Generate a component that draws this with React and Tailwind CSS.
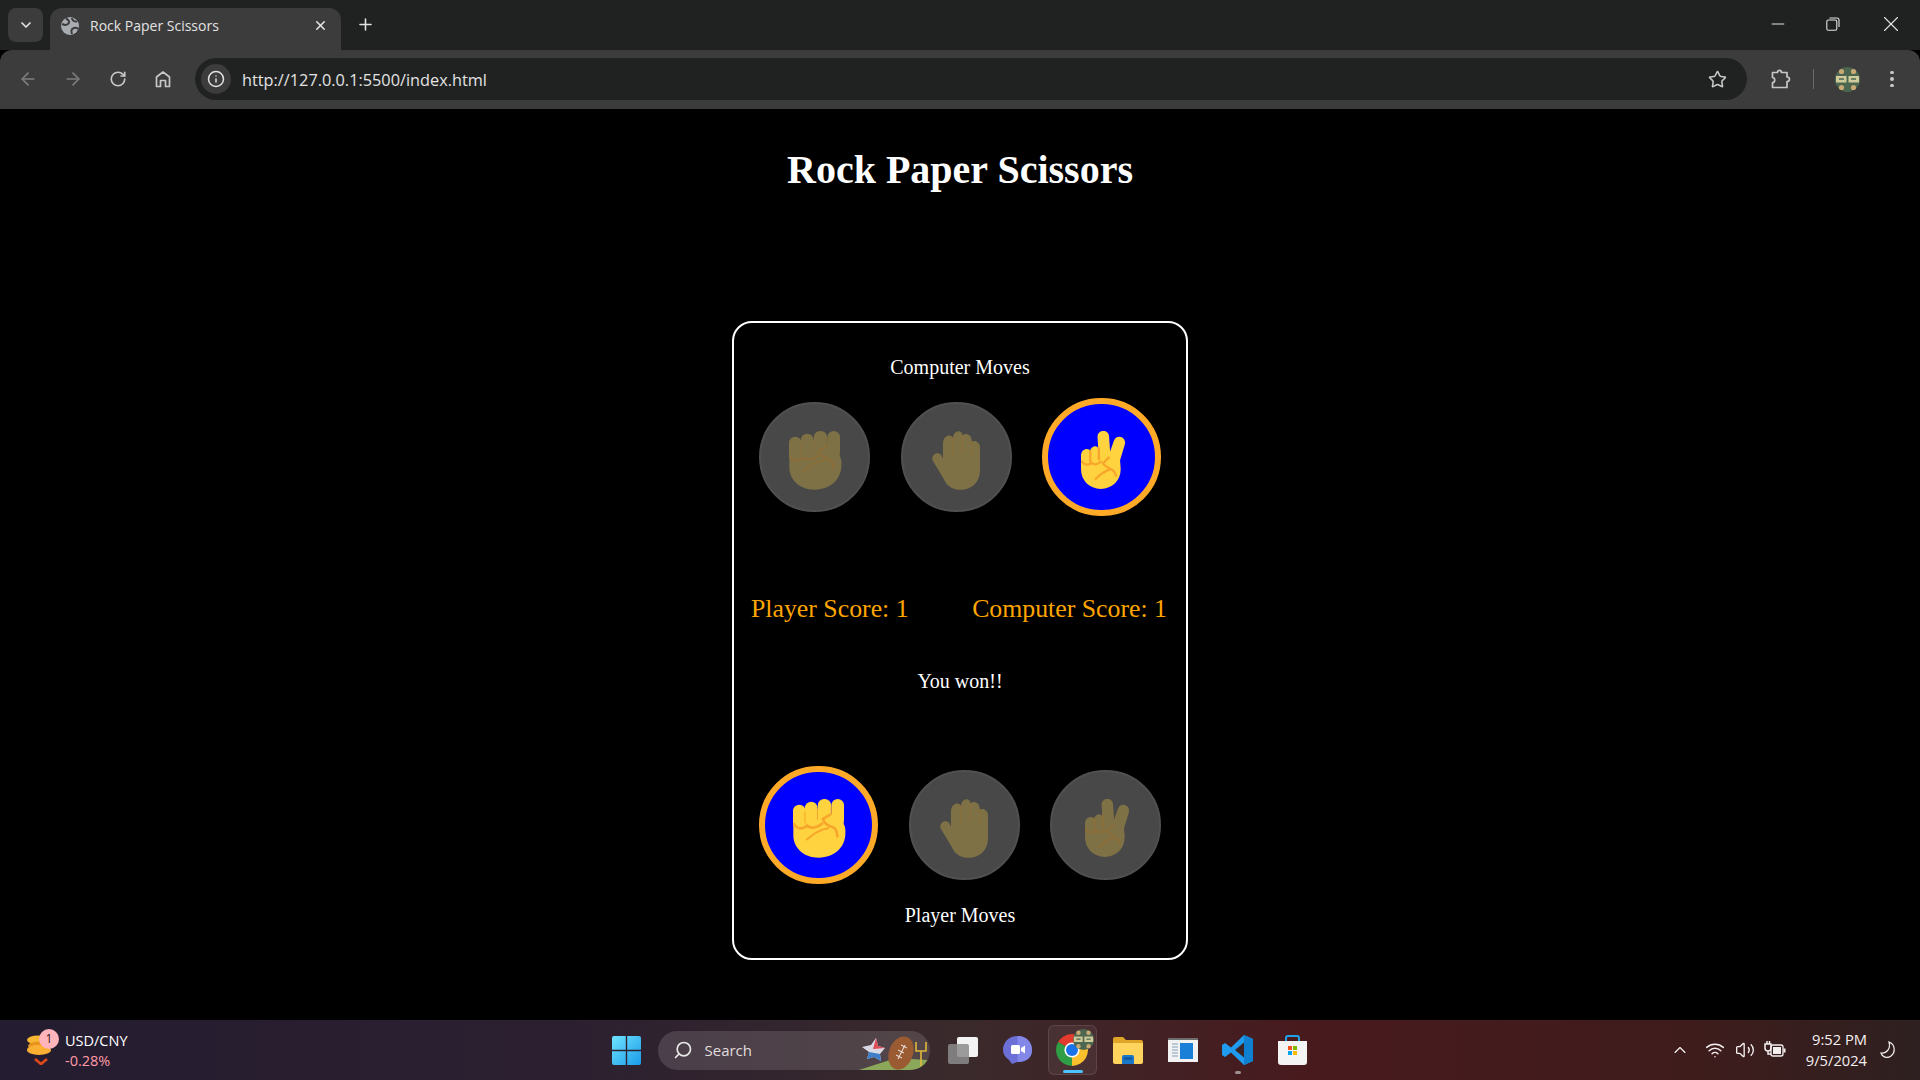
import React from 'react';
import { ArrowLeft, ArrowRight, RotateCw, Info, Star, X, Plus, Minus, ChevronDown, ChevronUp, Search, Wifi, Volume2 } from 'lucide-react';

const BRIGHT = { skin: '#ffd23f', fold: '#f8a62b' };
const DIM = { skin: '#7e7145', fold: '#8a6f3c' };

function Fist({ dim }) {
  const c = dim ? DIM : BRIGHT;
  return (
    <svg width="53" height="59" viewBox="0 0 160 178" fill="none" className="mt-[6px] ml-[2px]">
      <rect x="0" y="17" width="38" height="75" rx="19" fill={c.skin} />
      <rect x="36" y="8" width="38" height="80" rx="19" fill={c.skin} />
      <rect x="75" y="0" width="40" height="80" rx="19" fill={c.skin} />
      <rect x="116" y="0" width="38" height="80" rx="19" fill={c.skin} />
      <path d="M1 60 L153 40 L153 75 C158 85 159 95 158 105 C158 145 125 177 78 177 C30 177 1 145 1 110 Z" fill={c.skin} />
      <path d="M36 38 L36 72 M74 30 L74 62 M115 24 L115 46" stroke={c.fold} strokeWidth="3" strokeLinecap="round" />
      <path d="M3 76 C12 92 32 92 42 80 C55 92 75 86 88 74" stroke={c.fold} strokeWidth="8" strokeLinecap="round" />
      <path d="M112 48 L90 60 C94 76 108 82 122 86 C132 90 132 100 134 113" stroke={c.fold} strokeWidth="8" strokeLinecap="round" strokeLinejoin="round" />
      <path d="M42 122 C60 105 82 92 106 88" stroke={c.fold} strokeWidth="6" strokeLinecap="round" />
    </svg>
  );
}

function Hand({ dim }) {
  const c = dim ? DIM : BRIGHT;
  return (
    <svg width="48" height="59" viewBox="0 0 145 177" fill="none" className="mt-[7px]">
      <path d="M33 40 C33 8 62 8 63 22 C65 -6 92 -6 93 14 C95 4 122 6 120 32 C125 26 146 30 145 50 L145 118 C145 155 120 177 86 177 C62 177 44 165 36 145 L3 90 C-6 72 16 58 28 72 L33 84 Z" fill={c.skin} />
      <path d="M62 22 L62 68 M92 14 L92 62 M120 32 L120 72" stroke={c.fold} strokeWidth="4" strokeLinecap="round" />
    </svg>
  );
}

function Peace({ dim }) {
  const c = dim ? DIM : BRIGHT;
  return (
    <svg width="44" height="58" viewBox="0 0 133 175" fill="none" className="mt-[6px] ml-[2px]">
      <path d="M50 18 C50 -6 85 -6 85 18 L88 62 L100 28 C108 8 140 18 132 42 L118 88 L120 115 C120 150 95 175 60 175 C25 175 0 150 0 115 L0 75 C0 52 24 50 28 60 C30 45 48 42 52 52 Z" fill={c.skin} />
      <path d="M28 60 L28 92 M54 52 L54 85" stroke={c.fold} strokeWidth="7" strokeLinecap="round" />
      <path d="M2 92 C14 106 26 102 32 96 C40 104 52 100 60 92" stroke={c.fold} strokeWidth="7" strokeLinecap="round" />
      <path d="M84 80 L66 98 C74 110 92 112 100 122 L106 135 M44 145 C58 130 72 122 88 116" stroke={c.fold} strokeWidth="7" strokeLinecap="round" strokeLinejoin="round" />
    </svg>
  );
}

function Move({ active, children }) {
  if (active) {
    return (
      <div className="flex h-[118px] w-[119px] items-center justify-center rounded-full border-[6px] border-[#ffa928] bg-[#0000ff]">
        {children}
      </div>
    );
  }
  return (
    <div className="flex h-[110px] w-[111px] items-center justify-center rounded-full border-2 border-[#505050] bg-[#484848]">
      {children}
    </div>
  );
}

function HomeIcon() {
  return (
    <svg width="20" height="20" viewBox="0 0 20 20" fill="none" stroke="#c7c7c7" strokeWidth="1.7">
      <path d="M3.5 17.5 V8 L10 3 L16.5 8 V17.5 H12.5 V11.5 H7.5 V17.5 Z" strokeLinejoin="round" />
    </svg>
  );
}

function ExtensionIcon() {
  return (
    <svg width="20" height="20" viewBox="0 0 20 20" fill="none" stroke="#c7c7c7" strokeWidth="1.7">
      <path d="M1.5 3.5 H6.5 C6.5 0.7 10.5 0.7 10.5 3.5 H16 V8 C19.3 8 19.3 12.5 16 12.5 V18.5 H1.5 V13.5 C4.5 13.5 4.5 8.5 1.5 8.5 Z" strokeLinejoin="round" />
    </svg>
  );
}

function Avatar({ size }) {
  return (
    <svg width={size} height={size} viewBox="0 0 25 25">
      <circle cx="12.5" cy="12.5" r="12.5" fill="#4d6650" />
      <rect x="1" y="9" width="10.5" height="6.5" fill="#cfcb9a" />
      <rect x="13.5" y="9" width="10.5" height="6.5" fill="#cfcb9a" />
      <circle cx="6.5" cy="4.5" r="2.6" fill="#c9a974" />
      <circle cx="18.5" cy="4.5" r="2.6" fill="#c9a974" />
      <circle cx="6.5" cy="20.5" r="2.6" fill="#c9a974" />
      <circle cx="18.5" cy="20.5" r="2.6" fill="#c9a974" />
      <path d="M4 12h5M16 12h5" stroke="#4d6650" strokeWidth="1.5" />
    </svg>
  );
}

function WindowsLogo() {
  return (
    <svg width="29" height="29" viewBox="0 0 29 29">
      <defs>
        <linearGradient id="win" x1="0" y1="0" x2="1" y2="1">
          <stop offset="0" stopColor="#6fe3ff" />
          <stop offset="1" stopColor="#1a9be8" />
        </linearGradient>
      </defs>
      <path d="M0 2a2 2 0 0 1 2-2h11.8v13.8H0zM15.2 0H27a2 2 0 0 1 2 2v11.8H15.2zM0 15.2h13.8V29H2a2 2 0 0 1-2-2zM15.2 15.2H29V27a2 2 0 0 1-2 2H15.2z" fill="url(#win)" />
    </svg>
  );
}

function Highlight() {
  return (
    <svg width="70" height="40" viewBox="0 0 70 40" className="absolute bottom-0 right-[2px]">
      <path d="M1 40 L38 28 L70 30 L66 40 Z" fill="#8aa75a" />
      <path d="M18 8 L20 16 L27 18 L22 24 L23 31 L16 27 L9 29 L11 22 L4 17 L13 15 Z" fill="#d9d9e6" />
      <path d="M18 8 L20 16 L27 18 L15 19 Z" fill="#e04b55" />
      <path d="M11 22 L22 24 L23 31 L16 27 L9 29 Z" fill="#3f7fc9" />
      <ellipse cx="43" cy="23" rx="12" ry="17" transform="rotate(20 43 23)" fill="#9a5a32" />
      <path d="M40 29 L47 15 M40 20 L46 23 M43 15 L49 18 M38 25 L44 28" stroke="#eee" strokeWidth="1" />
      <path d="M58 12 V21 H68 V12 M63 21 V36" stroke="#e0b93c" strokeWidth="1.6" fill="none" />
    </svg>
  );
}

function TaskView() {
  return (
    <svg width="30" height="27" viewBox="0 0 30 27">
      <rect x="9" y="0" width="21" height="20" rx="2" fill="#f3f3f3" />
      <rect x="0" y="7" width="21" height="20" rx="2" fill="#8b8b8b" fillOpacity="0.85" />
    </svg>
  );
}

function Meet() {
  return (
    <svg width="29" height="28" viewBox="0 0 29 28">
      <path d="M14.5 0 C23 0 29 6 29 14 C29 22 23 26 14.5 26 L9 28 L6 24 C2 21 0 18 0 14 C0 6 6 0 14.5 0 Z" fill="#6b6fd6" />
      <path d="M14.5 0 C23 0 29 6 29 14 C29 22 23 26 14.5 26 Z" fill="#8287e8" />
      <rect x="8" y="9" width="9" height="9" rx="1.5" fill="#fff" />
      <path d="M18 12 L22 9.5 V17.5 L18 15 Z" fill="#fff" />
    </svg>
  );
}

function Chrome({ size }) {
  return (
    <svg width={size} height={size} viewBox="4 4 40 40">
      <path d="M24 24 L6.7 14 A20 20 0 0 1 41.3 14 Z" fill="#e33b2e" />
      <path d="M24 24 L41.3 14 A20 20 0 0 1 24 44 Z" fill="#fbc02d" />
      <path d="M24 24 L24 44 A20 20 0 0 1 6.7 14 Z" fill="#2f9e44" />
      <circle cx="24" cy="24" r="9.5" fill="#fff" />
      <circle cx="24" cy="24" r="7.5" fill="#1a73e8" />
    </svg>
  );
}

function Folder() {
  return (
    <svg width="30" height="27" viewBox="0 0 30 27">
      <path d="M0 2 a2 2 0 0 1 2-2 H10 L13 3 H28 a2 2 0 0 1 2 2 V8 H0 Z" fill="#e0a526" />
      <path d="M0 6 H30 V25 a2 2 0 0 1-2 2 H2 a2 2 0 0 1-2-2 Z" fill="#ffd45c" />
      <path d="M9 27 V20 a2 2 0 0 1 2-2 H19 a2 2 0 0 1 2 2 V27 Z" fill="#1976c9" />
      <rect x="11" y="20.5" width="8" height="2" fill="#0f4f94" />
    </svg>
  );
}

function AppWindow() {
  return (
    <svg width="30" height="24" viewBox="0 0 30 24">
      <rect width="30" height="24" fill="#f2f2f2" />
      <rect width="30" height="2" fill="#6d6d6d" />
      <rect x="12" y="5" width="13" height="16" fill="#1a7fd6" />
      <path d="M4 6h6M4 9h6M4 12h6M4 15h6M4 18h6" stroke="#a9bccd" strokeWidth="1.3" />
    </svg>
  );
}

function VSCode() {
  return (
    <svg width="31" height="30" viewBox="0 0 31 30">
      <path d="M22 0 L31 4 V26 L22 30 L9 17.5 L3 22 L0 20 V10 L3 8 L9 12.5 Z" fill="#1f9cf0" />
      <path d="M22 0 L31 4 V26 L22 30 Z" fill="#0f7fd0" />
      <path d="M22 7.5 L13 15 L22 22.5 Z" fill="#3b2426" />
    </svg>
  );
}

function Store() {
  return (
    <svg width="29" height="30" viewBox="0 0 29 30">
      <path d="M8 6 V3 a2 2 0 0 1 2-2 H19 a2 2 0 0 1 2 2 V6" fill="none" stroke="#1fa2e8" strokeWidth="2" />
      <path d="M0 6 H29 V27 a3 3 0 0 1-3 3 H3 a3 3 0 0 1-3-3 Z" fill="#f4f4f4" />
      <rect x="10" y="11" width="4" height="4" fill="#f25022" />
      <rect x="15" y="11" width="4" height="4" fill="#7fba00" />
      <rect x="10" y="16" width="4" height="4" fill="#00a4ef" />
      <rect x="15" y="16" width="4" height="4" fill="#ffb900" />
    </svg>
  );
}

function Coins() {
  return (
    <svg width="24" height="30" viewBox="0 0 24 30">
      <ellipse cx="11" cy="5" rx="11" ry="4.5" fill="#f7b733" />
      <ellipse cx="12" cy="11" rx="11" ry="4.5" fill="#e8941f" />
      <ellipse cx="12" cy="15" rx="12" ry="5" fill="#fbb034" />
      <path d="M8 24 L14 29 L20 24" stroke="#d9481c" strokeWidth="2.8" fill="none" />
    </svg>
  );
}

export default function App() {
  return (
    <div className="flex h-screen w-full flex-col overflow-hidden bg-black font-['Liberation_Serif',serif]">
      {/* browser chrome */}
      <div className="flex h-[50px] items-start bg-[#202222] pt-2 pl-2 font-['Open_Sans',sans-serif] text-[#e3e3e3]">
        <div className="flex h-[34px] w-[35px] items-center justify-center rounded-lg bg-[#3c3c3c]">
          <ChevronDown size={16} strokeWidth={2.5} />
        </div>
        <div className="ml-[7px] flex h-[42px] w-[291px] items-center rounded-t-xl bg-[#3c3c3c] pb-[7px] pl-[11px] pr-[13px]">
          <svg width="18" height="18" viewBox="0 0 18 18">
            <circle cx="9" cy="9" r="9" fill="#a9adb1" />
            <path d="M5 1.5 C8 3 9 5 7 7 C5 8.5 3 8 1 7 M11 17 C10 14 10 12 13 11 C15 10.5 16 11 17.5 12 M11 1 C11 3 13 5 16 4.5" stroke="#3c3c3c" strokeWidth="2" fill="none" />
          </svg>
          <span className="ml-[11px] flex-1 text-[14px]">Rock Paper Scissors</span>
          <X size={15} strokeWidth={2.5} />
        </div>
        <Plus size={19} strokeWidth={2} className="ml-[15px] mt-[7px]" />
        <div className="ml-auto flex h-[32px] items-center">
          <div className="flex w-[55px] justify-center"><Minus size={20} strokeWidth={1.2} /></div>
          <div className="flex w-[55px] justify-center">
            <svg width="14" height="14" viewBox="0 0 14 14" fill="none" stroke="#e3e3e3" strokeWidth="1.1">
              <rect x="0.8" y="3" width="10" height="10.2" rx="1.5" />
              <path d="M3.5 1 H11 a2 2 0 0 1 2 2 V10" />
            </svg>
          </div>
          <div className="ml-[3px] flex w-[55px] justify-center"><X size={26} strokeWidth={1} /></div>
          <div className="w-[2px]" />
        </div>
      </div>

      <div className="flex h-[59px] items-center rounded-t-xl bg-[#3c3c3c] pl-[5px] pb-[1px] text-[#c7c7c7]">
        <div className="flex w-[45px] justify-center text-[#7d7d7d]"><ArrowLeft size={20} /></div>
        <div className="flex w-[45px] justify-center text-[#7d7d7d]"><ArrowRight size={20} /></div>
        <div className="flex w-[45px] justify-center"><RotateCw size={18} strokeWidth={2.2} /></div>
        <div className="flex w-[45px] justify-center"><HomeIcon /></div>
        <div className="ml-[10px] flex h-[42px] flex-1 items-center rounded-full bg-[#202222] pl-[6px] pr-[20px]">
          <div className="flex h-[30px] w-[30px] items-center justify-center rounded-full bg-[#3c3c3c]">
            <Info size={18} className="text-[#e3e3e3]" />
          </div>
          <span className="ml-[11px] flex-1 pt-[2px] font-['Open_Sans',sans-serif] text-[16.3px] text-[#e3e3e3]">http://127.0.0.1:5500/index.html</span>
          <Star size={19} />
        </div>
        <div className="flex w-[173px] items-center pl-[24px]">
          <ExtensionIcon />
          <div className="ml-[22px] h-[20px] w-[1px] bg-[#6a6a6a]" />
          <div className="ml-[21px]"><Avatar size={25} /></div>
          <div className="ml-[30px] flex flex-col gap-[3px]">
            <div className="h-[3.5px] w-[3.5px] rounded-full bg-[#c7c7c7]" />
            <div className="h-[3.5px] w-[3.5px] rounded-full bg-[#c7c7c7]" />
            <div className="h-[3.5px] w-[3.5px] rounded-full bg-[#c7c7c7]" />
          </div>
        </div>
      </div>

      {/* page */}
      <main className="flex flex-1 flex-col items-center bg-black pt-[38px] text-white">
        <h1 className="text-[40px] leading-[46px] font-bold">Rock Paper Scissors</h1>
        <div className="mt-[128px] w-[456px] rounded-[20px] border-2 border-white pt-[33px] pb-[32px]">
          <p className="text-center text-[20px] leading-[23px]">Computer Moves</p>
          <div className="mt-[19px] flex h-[118px] items-center justify-between px-[25px]">
            <Move><Fist dim /></Move>
            <Move><Hand dim /></Move>
            <Move active><Peace /></Move>
          </div>
          <div className="mt-[79px] flex justify-between pl-[17px] pr-[19px] text-[25.8px] leading-[28px] text-[#ffa500]">
            <span>Player Score: 1</span>
            <span>Computer Score: 1</span>
          </div>
          <p className="mt-[47px] text-center text-[20px] leading-[22px]">You won!!</p>
          <div className="mt-[74px] flex h-[118px] items-center justify-between px-[25px]">
            <Move active><Fist /></Move>
            <Move><Hand dim /></Move>
            <Move><Peace dim /></Move>
          </div>
          <p className="mt-[20px] text-center text-[20px] leading-[22px]">Player Moves</p>
        </div>
      </main>

      {/* taskbar */}
      <div className="grid h-[60px] grid-cols-[1fr_auto_1fr] items-center bg-[linear-gradient(90deg,#241c30_0%,#2c2030_30%,#3a2a2c_50%,#481a1e_68%,#3f1c1c_88%,#2e2020_100%)] font-['Open_Sans',sans-serif] text-white">
        <div className="flex items-center pl-[27px]">
          <div className="relative">
            <Coins />
            <div className="absolute -right-[8px] -top-[6px] flex h-[20px] w-[20px] items-center justify-center rounded-full bg-[#ffb3ba] text-[12px] text-[#2a1a20]">1</div>
          </div>
          <div className="ml-[14px] flex flex-col">
            <span className="text-[14.5px] leading-[21px]">USD/CNY</span>
            <span className="text-[14.5px] leading-[20px] text-[#ff9aa8]">-0.28%</span>
          </div>
        </div>

        <div className="flex items-center">
          <WindowsLogo />
          <div className="relative ml-[17px] flex h-[39px] w-[272px] items-center overflow-hidden rounded-full bg-white/[0.13] pl-[15px]">
            <Search size={20} className="-scale-x-100 text-[#e8e8e8]" />
            <span className="ml-[12px] text-[15px] text-[#e0dcdc]">Search</span>
            <Highlight />
          </div>
          <div className="ml-[18px]"><TaskView /></div>
          <div className="ml-[25px]"><Meet /></div>
          <div className="relative ml-[16px] flex h-[50px] w-[49px] items-center justify-center rounded-md border border-white/10 bg-white/[0.06]">
            <Chrome size={32} />
            <div className="absolute right-[2px] top-[3px]"><Avatar size={21} /></div>
            <div className="absolute bottom-[1px] left-[14px] h-[3px] w-[20px] rounded-full bg-[#4cc2ff]" />
          </div>
          <div className="ml-[16px]"><Folder /></div>
          <div className="ml-[25px]"><AppWindow /></div>
          <div className="relative ml-[24px]">
            <VSCode />
            <div className="absolute -bottom-[9px] left-[13px] h-[3px] w-[6px] rounded-full bg-[#9b8f8f]" />
          </div>
          <div className="ml-[25px] mr-[2px]"><Store /></div>
        </div>

        <div className="flex items-center justify-end pr-[24px] text-[#f5f0f0]">
          <ChevronUp size={20} strokeWidth={1.4} />
          <Wifi size={20} strokeWidth={1.8} className="ml-[15px]" />
          <Volume2 size={20} strokeWidth={1.6} className="ml-[10px]" />
          <svg width="22" height="18" viewBox="0 0 22 18" fill="none" className="ml-[9px]">
            <path d="M1 3h6v4a3 3 0 0 1-6 0zM3 0v3M5.5 0v3M4 10v3h3" stroke="#f5f0f0" strokeWidth="1.5" />
            <rect x="7" y="4" width="12" height="11" rx="2" stroke="#f5f0f0" strokeWidth="1.3" />
            <rect x="9" y="6" width="8" height="7" fill="#f5f0f0" />
            <rect x="19.5" y="7.5" width="2" height="4" fill="#f5f0f0" />
          </svg>
          <div className="ml-[20px] flex flex-col items-end text-[14.7px] leading-[21px]">
            <span>9:52 PM</span>
            <span>9/5/2024</span>
          </div>
          <svg width="16" height="18" viewBox="0 0 16 18" fill="none" stroke="#f5f0f0" strokeWidth="1.2" className="ml-[13px]">
            <path d="M9 1 C15 3 16 11 11 15 C7 18 2 16 1 12 C6 13 11 8 9 1 Z" />
          </svg>
        </div>
      </div>
    </div>
  );
}
